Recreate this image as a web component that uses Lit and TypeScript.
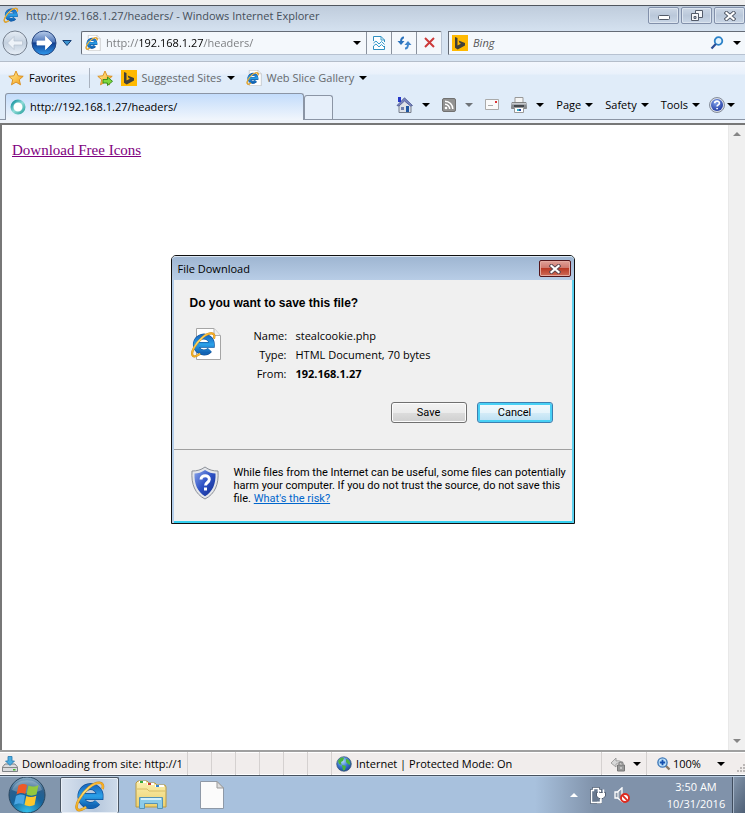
import { LitElement, html, css, svg } from "lit";
import { customElement } from "lit/decorators.js";

const defs = html`<svg class="defs" aria-hidden="true">
  <defs>
    <linearGradient id="eBlue" x1="0" y1="0" x2="0" y2="1"><stop offset="0" stop-color="#1b6fc4" /><stop offset=".5" stop-color="#2ba0e8" /><stop offset="1" stop-color="#1264b4" /></linearGradient>
    <linearGradient id="gold" x1="1" y1="0" x2="0" y2="1"><stop offset="0" stop-color="#f7a81c" /><stop offset=".5" stop-color="#fbe07a" /><stop offset="1" stop-color="#f0a818" /></linearGradient>
    <linearGradient id="star" x1="0" y1="0" x2="1" y2="1"><stop offset="0" stop-color="#fff3a0" /><stop offset="1" stop-color="#f59a10" /></linearGradient>
    <linearGradient id="fwd" x1="0" y1="0" x2="0" y2="1"><stop offset="0" stop-color="#b9cdea" /><stop offset=".45" stop-color="#5078bb" /><stop offset=".5" stop-color="#123e8e" /><stop offset="1" stop-color="#2f9bf0" /></linearGradient>
    <linearGradient id="bck" x1="0" y1="0" x2="0" y2="1"><stop offset="0" stop-color="#e6edf5" /><stop offset=".5" stop-color="#c3d0df" /><stop offset="1" stop-color="#e9f0f8" /></linearGradient>
    <radialGradient id="orb" cx=".5" cy="1" r="1"><stop offset="0" stop-color="#35c5ee" /><stop offset=".5" stop-color="#17639b" /><stop offset=".75" stop-color="#2c5f8c" /><stop offset="1" stop-color="#8fb0c8" /></radialGradient>
    <radialGradient id="help" cx=".4" cy=".3" r=".8"><stop offset="0" stop-color="#7fa0ea" /><stop offset="1" stop-color="#16309c" /></radialGradient>
    <linearGradient id="shield" x1="0" y1="0" x2="1" y2="1"><stop offset="0" stop-color="#8ba5ea" /><stop offset=".5" stop-color="#2c50c4" /><stop offset="1" stop-color="#122c8c" /></linearGradient>
    <radialGradient id="globe" cx=".4" cy=".3" r=".8"><stop offset="0" stop-color="#b4dcff" /><stop offset=".5" stop-color="#3b78d0" /><stop offset="1" stop-color="#143a8a" /></radialGradient>
    <linearGradient id="spin" x1="0" y1="0" x2="1" y2="1"><stop offset="0" stop-color="#0e8f9c" /><stop offset=".5" stop-color="#8fdcd8" /><stop offset="1" stop-color="#2ea4a0" /></linearGradient>
    <linearGradient id="folder" x1="0" y1="0" x2="0" y2="1"><stop offset="0" stop-color="#fbf0b0" /><stop offset="1" stop-color="#ecd06e" /></linearGradient>
  </defs>
</svg>`;

const eMark = svg`<path d="M10 16.500H26A9.500 9.500 0 1 0 23.500 22.500" fill="none" stroke="#0f4f98" stroke-width="7"/>
  <path d="M10 16.500H26A9.500 9.500 0 1 0 23.500 22.500" fill="none" stroke="url(#eBlue)" stroke-width="5.600"/>
  <path d="M28.500 9C31 1 23 1 15 7.500C7 14 0 26 3.500 29.500C5 31 9 29.500 12 27" fill="none" stroke="#c98a18" stroke-width="2.600"/>
  <path d="M28.500 9C31 1 23 1 15 7.500C7 14 0 26 3.500 29.500C5 31 9 29.500 12 27" fill="none" stroke="url(#gold)" stroke-width="1.800"/>`;

const ie = (s: number) => html`<svg width=${s} height=${s} viewBox="0 0 32 32" aria-hidden="true">${eMark}</svg>`;
const iePage = (s: number) => html`<svg width=${s} height=${s} viewBox="0 0 32 32" aria-hidden="true">
  <path d="M6.500 .5H24L30.500 7.500V31.500H6.500Z" fill="#fff" stroke="#a5a5a5" /><path d="M24 .5V7.500H30.500" fill="#eee" stroke="#b0b0b0" />
  <g transform="translate(0 3) scale(.84)">${eMark}</g></svg>`;
const caret = (cls = "") => html`<svg class="caret ${cls}" width="8" height="4" viewBox="0 0 8 4" aria-hidden="true"><path d="M0 0H8L4 4Z" fill="currentColor" /></svg>`;
const bing = html`<svg width="16" height="16" viewBox="0 0 16 16" aria-hidden="true"><path fill="#ffb900" d="M0 0H16V16H0Z" /><path fill="#41403a" d="M3 2L5.500 3V10.500L9 8.700L7.600 8L6.600 5.600L13 8V10.600L5.700 14.500L3 12.800Z" /></svg>`;
const starPath = "M8 1L10.100 5.800L15.200 6.300L11.300 9.700L12.500 14.800L8 12.100L3.500 14.800L4.700 9.700L.8 6.300L5.900 5.800Z";
const star = html`<svg width="16" height="16" viewBox="0 0 16 16" aria-hidden="true"><path d=${starPath} fill="url(#star)" stroke="#d88a1a" stroke-width=".9" /></svg>`;
const starAdd = html`<svg width="16" height="16" viewBox="0 0 16 16" aria-hidden="true"><path d=${starPath} fill="url(#star)" stroke="#d88a1a" stroke-width=".9" /><path d="M6 9.500H10.500V7L15.500 11.300L10.500 15.500V13H6Z" fill="#7fd83e" stroke="#2f8a18" stroke-width=".9" /></svg>`;
const helpIcon = html`<svg width="16" height="16" viewBox="0 0 16 16" aria-hidden="true"><circle cx="8" cy="8" r="7.500" fill="#d8dde8" stroke="#6f7684" stroke-width=".8" /><circle cx="8" cy="8" r="6" fill="url(#help)" /><path d="M5.700 6.300C5.700 3.500 10.400 3.500 10.400 6.200C10.400 7.900 8.100 7.800 8.100 9.500M8.100 10.900V12.300" fill="none" stroke="#fff" stroke-width="1.700" /></svg>`;
const closeGlyph = (stroke: string, edge: string) => html`<svg width="12" height="10" viewBox="0 0 12 10" aria-hidden="true"><path d="M2.500 2L9.500 8M9.500 2L2.500 8" stroke=${edge} stroke-width="4" stroke-linecap="square" /><path d="M2.500 2L9.500 8M9.500 2L2.500 8" stroke=${stroke} stroke-width="2.200" stroke-linecap="square" /></svg>`;

@customElement("app-root")
export class AppRoot extends LitElement {
  static styles = css`
    :host { display: flex; flex-direction: column; min-height: 100vh; font: 11px/16px "Open Sans", "Noto Sans", sans-serif; color: #000; background: #f0f0f0; padding-top: 5px; box-sizing: border-box; overflow: hidden; position: relative; }
    * { box-sizing: border-box; }
    svg { display: block; flex: none; }
    .defs { position: absolute; width: 0; height: 0; }
    button { font: inherit; color: inherit; border: 0; background: none; padding: 0; display: flex; align-items: center; flex: none; white-space: nowrap; }
    input { font: inherit; border: 0; padding: 0; background: none; outline: 0; min-width: 0; flex: 1; }
    .chrome { background: linear-gradient(#bfccdc, #d7e4f2 28px); border-top: 1px solid #50565e; }
    .titlebar { display: flex; align-items: flex-start; height: 24px; padding-left: 3px; color: #454e59; }
    .titlebar svg { margin-top: 1px; }
    .titlebar h1 { font: inherit; margin: 2px 0 0 7px; flex: 1; white-space: nowrap; }
    .winbtns { display: flex; gap: 2px; }
    .winbtns button { width: 31px; height: 17px; margin-top: 1px; border: 1px solid #8290aa; border-radius: 2px; background: linear-gradient(#ccd7e5, #bac8da 50%, #c9d6e6); justify-content: center; box-shadow: inset 0 0 0 1px #dce5ef; }
    .winbtns svg { margin: 0; }
    .nav { display: flex; align-items: center; height: 31px; padding-bottom: 6px; }
    .arrows { display: flex; align-items: center; width: 81px; padding-left: 2px; gap: 3px; }
    .arrows .drop { margin-left: 2px; }
    .address { flex: 359 1 0; display: flex; align-items: stretch; height: 24px; border: 1px solid #b7c2d1; border-top-color: #646b76; border-left-color: #646b76; border-radius: 2px; background: #f4f8fc; }
    .field { display: flex; align-items: center; flex: 1; padding: 0 5px 0 3px; gap: 5px; }
    .url { color: transparent; background: linear-gradient(90deg, #77797c 34px, #000 34px, #000 98px, #77797c 98px); background-clip: text; -webkit-background-clip: text; }
    .address > button { width: 25px; justify-content: center; border-left: 1px solid #8a929e; }
    .search { flex: 289 1 0; display: flex; align-items: center; height: 24px; margin-left: 6px; padding: 0 4px 0 3px; gap: 5px; border: 1px solid #b7c2d1; border-top-color: #646b76; border-left-color: #646b76; border-right: 0; background: #f4f8fc; }
    .search input { font-style: italic; color: #555; }
    .search input::placeholder { color: #555; opacity: 1; }
    .search .drop { margin-left: 4px; }
    .bars { background: linear-gradient(#f3f7fd, #e9f1fb 12px, #e0ecf9 13px, #e0ecf9); border-top: 1px solid #b4bdca; }
    .favs { display: flex; align-items: center; height: 31px; padding-left: 8px; }
    .favs button { gap: 5px; }
    .favs .link { color: #67696c; margin-left: 8px; }
    .favs .link + .link { margin-left: 11px; }
    .favs .caret { color: #000; }
    .rule { width: 1px; height: 20px; background: #a9b2bf; margin: 0 7px 0 13px; }
    .tabs { display: flex; align-items: flex-end; height: 27px; border-bottom: 1px solid #8b95a5; padding-left: 5px; }
    .tab { display: flex; align-items: center; gap: 4px; flex: 299 1 0; height: 27px; margin-bottom: -1px; padding-left: 4px; border: 1px solid #8b95a5; border-bottom: 0; border-radius: 3px 3px 0 0; background: linear-gradient(#c3dcfb, #f1f6fc); }
    .newtab { width: 29px; height: 24px; border: 1px solid #8b95a5; border-radius: 3px 3px 0 0; border-bottom: 0; background: #e6effa; }
    .tools { display: flex; align-items: center; justify-content: flex-end; flex: 411 1 0; height: 27px; padding: 0 10px 2px 0; }
    .tools button { gap: 4px; }
    .tools .wide { gap: 9px; margin-right: 12px; }
    .tools .menu { margin-right: 12px; }
    .tools .help { gap: 2px; margin-left: -3px; }
    .tools .mail { margin-right: 12px; }
    .tools .dim .caret { color: #6f7378; }
    .edge { height: 5px; background: #eef3fa; border-bottom: 2px solid #777; }
    .page { flex: 1; display: flex; background: #fff; border-left: 2px solid #777; min-height: 400px; }
    .doc { flex: 1; padding: 16px 10px; font: 15px/18px "Liberation Serif", serif; }
    .doc a { color: #800080; }
    .scroll { width: 17px; background: #f0f0f0; border-left: 1px solid #e8e8e8; display: flex; flex-direction: column; justify-content: space-between; align-items: center; padding: 7px 0; color: #868686; }
    .up { transform: rotate(180deg); }
    .status { display: flex; align-items: stretch; height: 26px; background: #f1edec; border-top: 2px solid #a0a0a0; border-bottom: 1px solid #47525f; box-shadow: inset 0 1px #fff, inset 0 -1px #fff; }
    .cell { display: flex; align-items: center; border-right: 1px solid #d5d1d0; width: 24px; flex: none; }
    .cell.message { width: 188px; padding-left: 2px; gap: 4px; white-space: nowrap; }
    .cell.zone { flex: 1; padding-left: 4px; gap: 4px; }
    .cell.lock { width: 45px; gap: 7px; padding-left: 8px; }
    .cell.zoom { width: 98px; border: 0; padding-left: 10px; }
    .zoom button { gap: 2px; }
    .zoom .caret { margin-left: 14px; }
    .zoom .grip { margin: 8px 0 0 auto; }
    .taskbar { display: flex; height: 37px; background: #a8c1dd; border-top: 1px solid #bed0e4; overflow: hidden; }
    .taskbar > button { justify-content: center; }
    .start { width: 60px; padding-right: 6px; background: #8296ad; }
    .task { width: 59px; border: 1px solid #4a5664; border-bottom: 0; background: linear-gradient(90deg, #d7e1ee, #b7c8dd 60%, #cedbea); border-radius: 2px; box-shadow: inset 0 0 0 1px #e8eff7; }
    .folders { width: 64px; }
    .file { width: 58px; }
    .tray { flex: 1; display: flex; align-items: center; justify-content: flex-end; background: linear-gradient(90deg, transparent calc(100% - 210px), #8092aa calc(100% - 150px)); }
    .tray .icon { width: 24px; justify-content: center; }
    .clock { color: #fff; text-align: center; line-height: 17px; margin: 0 4px 0 30px; width: 64px; }
    .peek { width: 13px; height: 37px; background: linear-gradient(120deg, #8496ac, #4e5f75); border-left: 1px solid #3f4c5d; box-shadow: inset 1px 0 #a5b4c7; }
    .dialog { position: absolute; top: 255px; left: 50%; margin-left: -202px; width: 404px; background: #f0f0f0; border: 1px solid #101010; border-radius: 5px 5px 0 0; box-shadow: inset 2px 0 #b6cfea, inset -2px 0 #5dd0ee, inset 0 -2px #35d0f0; }
    .caption { display: flex; align-items: center; justify-content: space-between; height: 24px; padding: 0 3px 0 6px; border-radius: 4px 4px 0 0; background: linear-gradient(#9fb6d2, #b8cde6); border-top: 1px solid #dbe6f2; }
    .caption h2 { font: inherit; margin: 0; }
    .caption button { width: 32px; height: 17px; justify-content: center; border: 1px solid #53151a; border-radius: 2px; background: linear-gradient(#e0a199, #d07a6f 45%, #b93a26 50%, #cf6c58); box-shadow: inset 0 0 0 1px #e4aaa0; }
    .body { padding: 14px 19px 26px 16px; border-bottom: 1px solid #a0a0a0; margin: 0 2px; }
    .body h3 { font: bold 12px/18px "Liberation Sans", Arial, sans-serif; margin: 0 0 14px; }
    .info { display: flex; gap: 32px; }
    .info svg { margin-top: 2px; }
    .info dl { display: grid; grid-template-columns: 33px 1fr; column-gap: 9px; margin: 0; line-height: 19px; }
    .info dt { text-align: right; }
    .info dd { margin: 0; }
    .actions { display: flex; justify-content: flex-end; gap: 10px; margin-top: 19px; }
    .actions button { width: 76px; height: 21px; justify-content: center; font: 11px/16px Roboto, Arial, sans-serif; border: 1px solid #707070; border-radius: 3px; background: linear-gradient(#f2f2f2, #ebebeb 50%, #ddd 50%, #cfcfcf); box-shadow: inset 0 0 0 1px #fcfcfc; }
    .actions .focus { border-color: #3c7fb1; background: linear-gradient(#f4fafd, #e6f4fb 50%, #d5ecf8 50%, #b9dff2); box-shadow: inset 0 0 0 2px #48d0f5; }
    .warn { display: flex; gap: 15px; padding: 16px 6px 18px 19px; }
    .warn p { margin: 0; font: 11px/13px Roboto, Arial, sans-serif; flex: 1; }
    .warn a { color: #0066cc; }
  `;

  render() {
    return html`${defs}
      <header class="chrome">
        <div class="titlebar">
          ${ie(16)}
          <h1>http://192.168.1.27/headers/ - Windows Internet Explorer</h1>
          <div class="winbtns">
            <button aria-label="Minimize"><svg width="12" height="10" viewBox="0 0 12 10"><rect x=".5" y="4.500" width="11" height="4" rx="1" fill="#fff" stroke="#535b69" /></svg></button>
            <button aria-label="Restore"><svg width="12" height="11" viewBox="0 0 12 11"><path d="M4.500.5H11.500V7.500H4.500Z" fill="#f4f6f9" stroke="#535b69" /><path d="M.5 3.500H7.500V10.500H.5Z" fill="#f4f6f9" stroke="#535b69" /><path d="M3 6.500H5V8.500H3Z" fill="#b9c6d6" stroke="#535b69" /></svg></button>
            <button aria-label="Close">${closeGlyph("#fff", "#535b69")}</button>
          </div>
        </div>
        <div class="nav">
          <div class="arrows">
            <button aria-label="Back"><svg width="26" height="26" viewBox="0 0 26 26"><circle cx="13" cy="13" r="12" fill="url(#bck)" stroke="#75808f" /><path d="M5.500 13L12 6.500V11H20.500V15H12V19.500Z" fill="#eef3f9" stroke="#b4c0ce" stroke-width=".7" /></svg></button>
            <button aria-label="Forward"><svg width="26" height="26" viewBox="0 0 26 26"><circle cx="13" cy="13" r="12" fill="url(#fwd)" stroke="#26457e" /><path d="M21 13L14.500 6.500V11H6V15H14.500V19.500Z" fill="#fff" stroke="#fff" stroke-width=".8" /></svg></button>
            <button class="drop" aria-label="Recent pages"><svg width="10" height="6" viewBox="0 0 10 6"><path d="M.8.500H9.200L5 5.500Z" fill="#3b93cf" stroke="#173f75" /></svg></button>
          </div>
          <div class="address">
            <div class="field">${iePage(16)}<input class="url" aria-label="Address" value="http://192.168.1.27/headers/" /><button aria-label="Show addresses">${caret()}</button></div>
            <button aria-label="Compatibility view"><svg width="12" height="14" viewBox="0 0 12 14"><path d="M.5 5V.5H8L11.500 4V6M.5 10V13.500H11.500V10" fill="#fff" stroke="#2f8fc0" /><path d="M8 .5V4H11.500M.5 7L3 5L6 8L8.500 5.500L11.500 8.500M.5 10L3 8L6 11L8.500 8.500L11.500 11.500" fill="none" stroke="#3a9ccb" /></svg></button>
            <button aria-label="Refresh"><svg width="15" height="14" viewBox="0 0 15 14"><path d="M7 1.500C4.500 1.500 4 3 4 6" fill="none" stroke="#2b73bd" stroke-width="2" /><path d="M.5 5H7.500L4 9Z" fill="#2b73bd" /><path d="M8 12.500C10.500 12.500 11 11 11 8" fill="none" stroke="#3f86cc" stroke-width="2" /><path d="M7.500 9H14.500L11 5Z" fill="#3f86cc" /></svg></button>
            <button aria-label="Stop"><svg width="11" height="11" viewBox="0 0 11 11"><path d="M1 1L10 10M10 1L1 10" stroke="#cc3a3a" stroke-width="2" /></svg></button>
          </div>
          <div class="search">${bing}<input aria-label="Search" placeholder="Bing" />
            <button aria-label="Search Bing"><svg width="14" height="14" viewBox="0 0 14 14"><circle cx="8.500" cy="5" r="3.800" fill="#e5f4fd" stroke="#2b82c8" stroke-width="1.800" /><path d="M5.800 8L1.500 12.500" stroke="#2a4c94" stroke-width="2.200" /></svg></button>
            <button class="drop" aria-label="Search options">${caret()}</button>
          </div>
        </div>
        <div class="bars">
          <div class="favs">
            <button>${star}Favorites</button>
            <span class="rule"></span>
            <button aria-label="Add to Favorites">${starAdd}</button>
            <button class="link">${bing}Suggested Sites ${caret()}</button>
            <button class="link">${iePage(16)}Web Slice Gallery ${caret()}</button>
          </div>
          <div class="tabs">
            <div class="tab"><svg width="16" height="16" viewBox="0 0 16 16"><circle cx="8" cy="8" r="6" fill="#fff" stroke="url(#spin)" stroke-width="3" /></svg>http://192.168.1.27/headers/</div>
            <button class="newtab" aria-label="New tab"></button>
            <div class="tools">
              <button class="wide" aria-label="Home"><svg width="17" height="16" viewBox="0 0 17 16"><path d="M3 8L9 2L15 8V15.500H3Z" fill="#dfe2e8" stroke="#777e8c" /><path d="M1 8.500L8.500 .8L16.500 8.500L14.500 9L8.500 4L3 9Z" fill="#7b86c0" stroke="#4a568f" stroke-width=".8" /><path d="M2 0H5V5H2Z" fill="#2537c8" /><path d="M10 9H13V15H10Z" fill="#1f56a0" /><path d="M5 10H8V13H5Z" fill="#6f7fae" /></svg>${caret()}</button>
              <button class="wide dim" aria-label="Feeds"><svg width="14" height="14" viewBox="0 0 14 14"><rect x=".5" y=".5" width="13" height="13" rx="1.500" fill="#929292" stroke="#717171" /><circle cx="4" cy="10" r="1.300" fill="#fff" /><path d="M3 6.300A4.700 4.700 0 0 1 7.700 11M3 3.200A7.800 7.800 0 0 1 10.800 11" fill="none" stroke="#fff" stroke-width="1.500" /></svg>${caret()}</button>
              <button class="mail" aria-label="Read mail"><svg width="14" height="11" viewBox="0 0 14 11"><path d="M.5.5H13.500V10.500H.5Z" fill="#fafafa" stroke="#aaa" /><path d="M10 2H12V4H10Z" fill="#d33" /><path d="M3 6.500H8" stroke="#aaa" /></svg></button>
              <button class="wide" aria-label="Print"><svg width="16" height="16" viewBox="0 0 16 16"><path d="M4 .5H12V6H4Z" fill="#f5f5f5" stroke="#999" /><path d="M1 5.500H15L15.500 11.500H.5Z" fill="#8a8e93" stroke="#777" stroke-width=".8" /><path d="M1 6H15V7.500H1Z" fill="#c5c8cc" /><path d="M3 8H13V10H3Z" fill="#44484d" /><path d="M3.500 10.500H12.500V15.500H3.500Z" fill="#fff" stroke="#999" /><path d="M6 12H8V14H6Z" fill="#36b1c4" /><path d="M8 12H10V14H8Z" fill="#2a4ca5" /></svg>${caret()}</button>
              <button class="menu">Page ${caret()}</button>
              <button class="menu">Safety ${caret()}</button>
              <button class="menu">Tools ${caret()}</button>
              <button class="help" aria-label="Help">${helpIcon}${caret()}</button>
            </div>
          </div>
          <div class="edge"></div>
        </div>
      </header>

      <main class="page">
        <div class="doc"><a href="#">Download Free Icons</a></div>
        <div class="scroll">${caret("up")}${caret()}</div>
      </main>

      <footer class="status">
        <div class="cell message"><svg width="16" height="16" viewBox="0 0 16 16"><path d="M3 8H13L15.500 11V15.500H.5V11Z" fill="#d9dbde" stroke="#73777c" stroke-width=".9" /><path d="M.5 11.500H15.500" stroke="#888" /><path d="M11 13H13.500V14.500H11Z" fill="#42b82e" /><path d="M6 .5H10V5H12.500L8 9.500L3.500 5H6Z" fill="#4bacdf" stroke="#2377ae" stroke-width=".8" /></svg><span>Downloading from site: http://1</span></div>
        ${[0, 1, 2, 3, 4, 5].map(() => html`<div class="cell"></div>`)}
        <div class="cell zone"><svg width="16" height="16" viewBox="0 0 16 16"><circle cx="8" cy="8" r="7.300" fill="url(#globe)" stroke="#3a5374" stroke-width=".7" /><path d="M2 5C4 1 7 1 8 2L7 5L5 6L5.500 9L3 8ZM10 3C13 3 15 7 14 9L12 8L10 6ZM6 9L10 10L9 14L7 14.500Z" fill="#49b53c" /></svg>Internet | Protected Mode: On</div>
        <div class="cell lock"><svg width="16" height="16" viewBox="0 0 16 16"><path d="M1 7L6 2V5C10 4 12 6 12 8C10 6 8 7 6 8V11Z" fill="#d8d8d8" stroke="#929292" stroke-width=".8" /><path d="M7.500 9H14.500V15H7.500Z" fill="#999" stroke="#777" /><path d="M9 9V7.500C9 5.500 13 5.500 13 7.500V9" fill="none" stroke="#888" stroke-width="1.300" /><path d="M11 11V13" stroke="#eee" /></svg>${caret()}</div>
        <div class="cell zoom"><button><svg width="14" height="14" viewBox="0 0 14 14"><path d="M8.500 8.500L12.500 12.500" stroke="#8a7a68" stroke-width="2.400" /><circle cx="5.500" cy="5.500" r="4.600" fill="#bfe2fa" stroke="#4079b8" stroke-width="1.400" /><path d="M5.500 2.800V8.200M2.800 5.500H8.200" stroke="#1450b0" stroke-width="1.800" /></svg>100%${caret()}</button>
          <svg class="grip" width="8" height="8" viewBox="0 0 8 8"><path d="M6 0H8V2H6ZM3 3H5V5H3ZM6 3H8V5H6ZM0 6H2V8H0ZM3 6H5V8H3ZM6 6H8V8H6Z" fill="#bbb7b6" /></svg></div>
      </footer>

      <nav class="taskbar">
        <button class="start" aria-label="Start"><svg width="38" height="38" viewBox="0 0 38 38"><circle cx="19" cy="19" r="18" fill="url(#orb)" stroke="#28465f" /><path d="M4 14C8 1 30 1 34 14C26 18 12 18 4 14Z" fill="#fff" opacity=".25" />
          <path d="M10.500 9.500C13.500 7.500 16.500 7.500 19 9L17.300 18C14.500 16.500 11.500 16.500 8.500 18.500Z" fill="#ee5a28" /><path d="M20.500 9.500C23.500 11 27 11 30.500 9L28.500 18.500C25 20 21.500 20 18.500 18.500Z" fill="#93c83e" /><path d="M8 20C11.500 18 14 18 17 19.500L15.300 28.500C13 27 9.500 27 6 29Z" fill="#4aa6e4" /><path d="M18.300 20C21 21.500 24.500 21.500 28.300 19.800L26.500 29C23.500 30.500 19.500 30.500 16.500 29Z" fill="#fdc72c" /></svg></button>
        <button class="task" aria-label="Internet Explorer">${ie(32)}</button>
        <button class="folders" aria-label="Windows Explorer"><svg width="32" height="32" viewBox="0 0 32 32"><path d="M1 10V4L3 2H12L14 4H20L22 6H30L31 8V28H1Z" fill="url(#folder)" stroke="#b99a44" /><path d="M4 3H11M12 5H19M20 7H29" fill="none" stroke="#fff" stroke-width="2" /><path d="M5 2H8V4H5Z" fill="#35a93c" /><path d="M13 4H16V6H13Z" fill="#cf4232" /><path d="M21 6H24V8H21Z" fill="#3486d3" /><path d="M2 10H12L14 12H30" fill="none" stroke="#d8bc64" /><path d="M4.500 29.500V18.500H27.500V29.500H22.500V24.500H9.500V29.500Z" fill="#8ccbe9" stroke="#5593b5" /><path d="M6 20H26" stroke="#d5f1fd" stroke-width="2" /></svg></button>
        <button class="file" aria-label="Document"><svg width="24" height="28" viewBox="0 0 24 28"><path d="M.5.5H17L23.500 7V27.500H.5Z" fill="#fbfbfb" stroke="#8e99a7" /><path d="M17 .5V7H23.500Z" fill="#dedede" stroke="#999" /></svg></button>
        <div class="tray">
          <button class="icon" aria-label="Show hidden icons"><svg width="8" height="4" viewBox="0 0 8 4"><path d="M0 4L4 0L8 4Z" fill="#fff" /></svg></button>
          <button class="icon" aria-label="Power"><svg width="16" height="17" viewBox="0 0 16 17"><path d="M1.500 3.500H3.500V1.500H8.500V3.500H10.500V15.500H1.500Z" fill="#68788e" stroke="#39465a" stroke-width="2.500" /><path d="M1.500 3.500H3.500V1.500H8.500V3.500H10.500V15.500H1.500Z" fill="#68788e" stroke="#fff" stroke-width="1.400" /><path d="M6.500 5.500H15.500V9L13 11.500H9L6.500 9Z" fill="#fff" stroke="#39465a" stroke-width=".8" /><path d="M8.500 6V2.500M13.500 6V2.500M11 11V15.500H7" fill="none" stroke="#fff" stroke-width="1.500" /></svg></button>
          <button class="icon" aria-label="Volume muted"><svg width="16" height="16" viewBox="0 0 16 16"><path d="M1 5H3.500L8 .8V14.500L3.500 11H1Z" fill="#8a97a9" stroke="#fff" stroke-width="1.300" /><path d="M4 5V11" stroke="#fff" /><circle cx="11" cy="11" r="4" fill="#fff" stroke="#de2b20" stroke-width="1.900" /><path d="M8.200 8.200L13.800 13.800" stroke="#de2b20" stroke-width="1.900" /></svg></button>
          <div class="clock">3:50 AM<br />10/31/2016</div>
          <button class="peek" aria-label="Show desktop"></button>
        </div>
      </nav>

      <section class="dialog" role="dialog" aria-labelledby="dlg">
        <div class="caption"><h2 id="dlg">File Download</h2><button aria-label="Close dialog">${closeGlyph("#fff", "#5b4650")}</button></div>
        <div class="body">
          <h3>Do you want to save this file?</h3>
          <div class="info">${iePage(32)}
            <dl><dt>Name:</dt><dd>stealcookie.php</dd><dt>Type:</dt><dd>HTML Document, 70 bytes</dd><dt>From:</dt><dd><b>192.168.1.27</b></dd></dl>
          </div>
          <div class="actions"><button>Save</button><button class="focus">Cancel</button></div>
        </div>
        <div class="warn">
          <svg width="28" height="34" viewBox="0 0 28 34"><path d="M14 1C18 4 22 5 27 5C28 18 24 28 14 33C4 28 0 18 1 5C6 5 10 4 14 1Z" fill="#e4e6ea" stroke="#8d9199" /><path d="M14 4C17.500 6.500 21 7.500 24.500 7.600C25 18 21.500 26 14 30.300C6.500 26 3 18 3.500 7.600C7 7.500 10.500 6.500 14 4Z" fill="url(#shield)" /><path d="M10 13.500C10 8.300 18.500 8.500 18.300 13.500C18.200 16.500 14.500 16.500 14.500 19.500M14.500 21.500V24.500" fill="none" stroke="#fff" stroke-width="3" /></svg>
          <p>While files from the Internet can be useful, some files can potentially harm your computer. If you do not trust the source, do not save this file. <a href="#">What's the risk?</a></p>
        </div>
      </section>`;
  }
}
